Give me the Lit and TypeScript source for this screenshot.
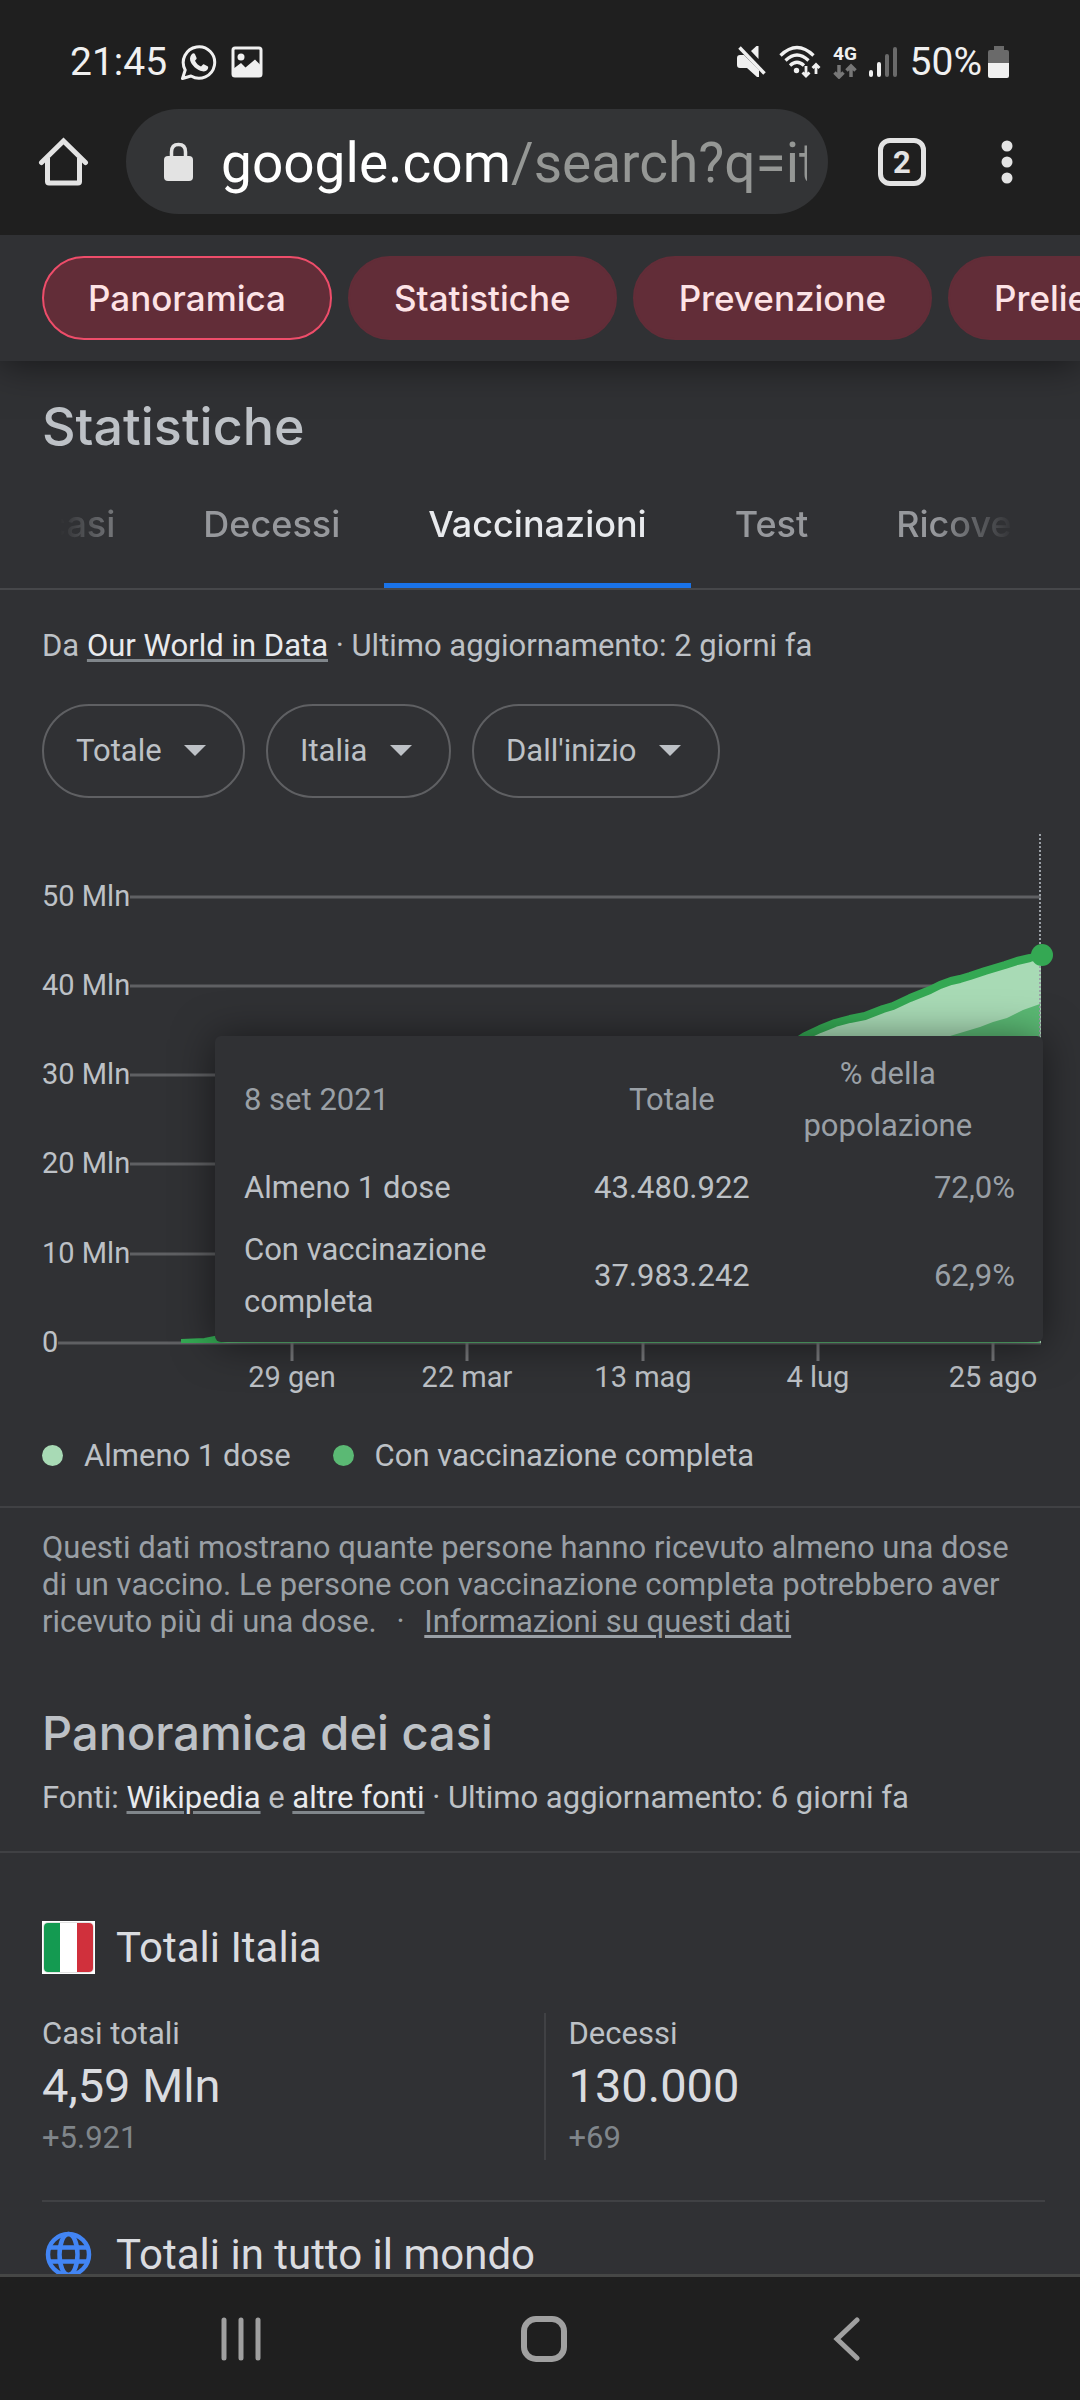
import { LitElement, html, css, svg } from "lit";
import { customElement } from "lit/decorators.js";

const chips = ["Panoramica", "Statistiche", "Prevenzione", "Prelievi"];
const tabs = ["Nuovi casi", "Decessi", "Vaccinazioni", "Test", "Ricoveri"];
const filters = [
  { label: "Dato", value: "Totale" },
  { label: "Paese", value: "Italia" },
  { label: "Periodo", value: "Dall'inizio" },
];

const yAxis = [
  { label: "50 Mln", y: 63 },
  { label: "40 Mln", y: 152 },
  { label: "30 Mln", y: 241 },
  { label: "20 Mln", y: 330 },
  { label: "10 Mln", y: 420 },
  { label: "0", y: 509 },
];
const xAxis = [
  { label: "29 gen", x: 292 },
  { label: "22 mar", x: 467 },
  { label: "13 mag", x: 643 },
  { label: "4 lug", x: 818 },
  { label: "25 ago", x: 993 },
];

const FIRST =
  "181,509 205,508 215,506 300,492 400,474 500,430 600,361 700,268 760,232 790,212 805,202 820,195 835,189 850,185 865,182 883,175 893,172 910,164 930,156 940,151 951,147 960,145 970,142 985,137 1005,131 1017,127 1030,124 1041,121";
const FULL =
  "181,509 300,500 450,478 600,430 750,340 850,262 950,202 970,196 980,193 993,188 1007,184 1023,176 1040,170";

@customElement("vaccine-chart")
class VaccineChart extends LitElement {
  static styles = css`
    :host {
      display: block;
      position: relative;
    }
    .plot {
      display: block;
      width: 100%;
      font: 29px/1 Roboto, sans-serif;
    }
    .label {
      fill: #bdc1c6;
    }
    .tip {
      position: absolute;
      top: 202px;
      left: 215px;
      right: 37px;
      padding: 7px 28px 9px 29px;
      border-radius: 6px;
      background: #303134;
      box-shadow: 0 2px 40px rgba(0, 0, 0, 0.5);
    }
    .data {
      width: 100%;
      table-layout: fixed;
      border-collapse: collapse;
      font: 31px/52px Roboto, sans-serif;
      color: #bdc1c6;
    }
    .data th,
    .data td {
      padding: 5px 0;
      font-weight: 400;
      text-align: center;
    }
    .data thead th {
      color: #9aa0a6;
    }
    .data .name {
      width: 44%;
      text-align: left;
    }
    .data .total {
      width: 23%;
    }
    .data .share {
      text-align: right;
      color: #9aa0a6;
    }
  `;

  render() {
    return html`
      <svg class="plot" viewBox="0 0 1080 570" role="img" aria-label="Vaccinazioni">
        <defs>
          <clipPath id="above-axis"><rect x="181" y="0" width="861" height="509" /></clipPath>
        </defs>
        ${yAxis.map(
          (t) => svg`
            <text class="label" x="42" y=${t.y + 9}>${t.label}</text>
            <path d="M${t.label === "0" ? 58 : 130} ${t.y}H1041" stroke="#5f6063" stroke-width="3" />`
        )}
        <polygon points="${FIRST} 1041,509 181,509" fill="#a8dab5" />
        <polygon points="${FULL} 1040,509 181,509" fill="#5bb974" />
        <polyline
          points=${FIRST}
          clip-path="url(#above-axis)"
          fill="none"
          stroke="#34a853"
          stroke-width="8"
          stroke-linejoin="round"
        />
        <path d="M1040 0V202" stroke="#9aa0a6" stroke-width="2" stroke-dasharray="2 2" />
        <circle cx="1042" cy="121" r="11" fill="#34a853" />
        ${xAxis.map(
          (t) => svg`
            <path d="M${t.x} 509V527" stroke="#77787b" stroke-width="3" />
            <text class="label" x=${t.x} y="553" text-anchor="middle">${t.label}</text>`
        )}
      </svg>
      <div class="tip">
        <table class="data">
          <thead>
            <tr>
              <th class="name" scope="col">8 set 2021</th>
              <th class="total" scope="col">Totale</th>
              <th scope="col">% della popolazione</th>
            </tr>
          </thead>
          <tbody>
            <tr>
              <th class="name" scope="row">Almeno 1 dose</th>
              <td>43.480.922</td>
              <td class="share">72,0%</td>
            </tr>
            <tr>
              <th class="name" scope="row">Con vaccinazione completa</th>
              <td>37.983.242</td>
              <td class="share">62,9%</td>
            </tr>
          </tbody>
        </table>
      </div>
    `;
  }
}

@customElement("status-bar")
class StatusBar extends LitElement {
  static styles = css`
    :host {
      display: flex;
      align-items: center;
      justify-content: space-between;
      height: 79px;
      padding: 22px 70px 0;
      font: 39px/48px Roboto, sans-serif;
      color: #f0f0f0;
    }
    .side {
      display: flex;
      align-items: center;
    }
    .left {
      gap: 14px;
    }
    .right {
      gap: 12px;
    }
    .power {
      display: flex;
      align-items: center;
      gap: 6px;
    }
    svg {
      display: block;
    }
  `;

  render() {
    return html`
      <div class="side left">
        <span>21:45</span>
        <svg width="36" height="36" viewBox="0 0 36 36" fill="none">
          <path d="M1.500 34.500L4.200 26A15.700 15.700 0 1 1 10 32Z" stroke="#f0f0f0" stroke-width="3" stroke-linejoin="round" />
          <path d="M11 10c1-1 2.500-.8 3 .3l1.500 3.400c.3.8 0 1.300-.5 1.900l-1 1.200c1.300 2.600 3.200 4.500 6 5.800l1.500-1.700c.5-.6 1-.7 1.700-.4l3.300 1.700c.8.4.8 1 .5 2.200-.7 2.300-3.400 3.300-5.500 2.900-6-1.200-11-6.200-12.300-10.800-.6-2.600.4-5.300 1.800-6.500z" fill="#f0f0f0" />
        </svg>
        <svg width="32" height="32" viewBox="0 0 32 32">
          <rect x="2" y="2" width="28" height="28" rx="2" fill="none" stroke="#f0f0f0" stroke-width="3" />
          <path d="M2 23l8-6 4.500 4.500L24 13.500l6 6V30H2z" fill="#f0f0f0" />
          <circle cx="10" cy="11" r="3.500" fill="#f0f0f0" />
        </svg>
      </div>
      <div class="side right">
        <svg width="30" height="33" viewBox="0 0 30 33" fill="#f0f0f0">
          <path d="M0 13q0-3 3-3h4L22 25v7h-2L10 23H3q-3 0-3-3z" />
          <path d="M21.500 1v13l-7.500-8 5.500-5z" />
          <path d="M2.500 2.500l25 26" stroke="#f0f0f0" stroke-width="3.500" />
        </svg>
        <svg width="42" height="34" viewBox="0 0 42 34" fill="none" stroke="#f0f0f0" stroke-width="3.300">
          <path d="M1.500 10.500Q18-5.500 34.500 10.500M6.500 15.500Q18 4.500 29.500 15.500M11 20.500Q18 14 25 20.500" />
          <circle cx="17.500" cy="25.500" r="2.700" fill="#f0f0f0" stroke="none" />
          <path d="M27 21v10M23.500 27.500l3.500 3.500 3.500-3.500M37 29V19.500M33.500 23l3.500-3.500 3.500 3.500" stroke-width="2.800" />
        </svg>
        <svg width="24" height="34" viewBox="0 0 24 34">
          <text x="12" y="15" text-anchor="middle" font-family="Roboto, sans-serif" font-weight="700" font-size="19" fill="#f0f0f0">4G</text>
          <path d="M6 20v12M1.500 27.500L6 32l4.500-4.500M18 32V21M13.500 25.500L18 21l4.500 4.500" fill="none" stroke="#777" stroke-width="3.500" />
        </svg>
        <svg width="29" height="32" viewBox="3 0 29 32" fill="none" stroke-width="4" stroke-linecap="round">
          <path d="M5 26v3M13 18v11" stroke="#f0f0f0" />
          <path d="M21 10v19M29 3v26" stroke="#6a6a6a" />
        </svg>
        <div class="power">
          <span>50%</span>
          <svg width="22" height="34" viewBox="0 0 22 34">
            <path d="M6 1h10v4h3q2 0 2 2v11H0V7q0-2 2-2h4z" fill="#6a6a6a" />
            <path d="M0 18h21v13q0 2-2 2H2q-2 0-2-2z" fill="#f0f0f0" />
          </svg>
        </div>
      </div>
    `;
  }
}

@customElement("browser-bar")
class BrowserBar extends LitElement {
  static styles = css`
    :host {
      display: flex;
      align-items: center;
      padding: 8px 58px 21px 38px;
    }
    button {
      display: grid;
      place-items: center;
      padding: 0;
      border: 0;
      background: none;
      color: #e3e3e3;
      font: 700 31px/40px Roboto, sans-serif;
    }
    .url {
      flex: 1;
      display: flex;
      align-items: center;
      gap: 28px;
      min-width: 0;
      height: 105px;
      margin: 0 50px 0 37px;
      padding: 0 21px 0 38px;
      border-radius: 53px;
      background: #333436;
      font: 55px/66px Roboto, sans-serif;
      color: #959795;
    }
    .lock {
      flex: none;
    }
    .address {
      flex: 1;
      padding-top: 2px;
      overflow: hidden;
      white-space: nowrap;
      color: inherit;
      text-decoration: none;
    }
    .host {
      color: #fff;
    }
    .count {
      box-sizing: border-box;
      width: 48px;
      height: 48px;
      border: 5px solid #e3e3e3;
      border-radius: 12px;
    }
    .more {
      width: 30px;
      margin-left: 66px;
    }
  `;

  render() {
    return html`
      <button aria-label="Home">
        <svg width="51" height="51" viewBox="0 0 51 51" fill="none" stroke="#e3e3e3" stroke-width="5">
          <path d="M3.500 26.500L25.500 5l22 21.500" stroke-linecap="round" />
          <path d="M9.500 22v23.500q0 1.500 1.500 1.500h29q1.500 0 1.500-1.500V22" />
        </svg>
      </button>
      <div class="url">
        <svg class="lock" width="29" height="40" viewBox="0 0 29 40">
          <rect x="0" y="14" width="29" height="25" rx="4" fill="#e3e3e3" />
          <path d="M7.500 15V10q0-7.500 7-7.500t7 7.500v5" fill="none" stroke="#e3e3e3" stroke-width="3.500" />
        </svg>
        <a class="address" href="#"><span class="host">google.com</span>/search?q=italia</a>
      </div>
      <button class="count">2</button>
      <button class="more" aria-label="Menu">
        <svg width="12" height="46" viewBox="0 0 12 46" fill="#e3e3e3">
          <circle cx="6" cy="7" r="5.500" />
          <circle cx="6" cy="23" r="5.500" />
          <circle cx="6" cy="39" r="5.500" />
        </svg>
      </button>
    `;
  }
}

@customElement("app-root")
class AppRoot extends LitElement {
  static styles = css`
    :host {
      display: flex;
      flex-direction: column;
      height: 100vh;
      overflow: hidden;
      background: #1f1f1f;
      color: #bdc1c6;
      font: 31px/37px Roboto, sans-serif;
    }
    .page {
      flex: 1;
      min-height: 0;
      overflow: hidden;
      background: #303134;
    }
    .chip-bar {
      box-shadow: 0 4px 36px rgba(0, 0, 0, 0.5);
    }
    .chips {
      display: flex;
      gap: 16px;
      padding: 21px 42px;
      overflow: hidden;
    }
    .chip {
      flex: none;
      box-sizing: border-box;
      height: 84px;
      padding: 0 44px;
      border: 2px solid #622d38;
      border-radius: 42px;
      background: #622d38;
      color: #fde3e6;
      font: 500 35px/40px Inter, sans-serif;
    }
    .chip.on {
      border-color: #ee4d6a;
    }
    h2 {
      margin: 0;
      padding: 0 42px;
      font: 500 52px/60px Inter, sans-serif;
      color: #bdc1c6;
    }
    .stats {
      padding-top: 36px;
    }
    .tabs {
      display: flex;
      margin-top: 27px;
      padding: 0 66px 0 60px;
      border-bottom: 2px solid #46474a;
    }
    .strip {
      flex: 1;
      display: flex;
      min-width: 0;
      overflow-x: auto;
      scrollbar-width: none;
      mask-image: linear-gradient(90deg, transparent, #000 80px, #000 calc(100% - 80px), transparent);
    }
    .tab {
      flex: none;
      height: 104px;
      padding: 0 44px 20px;
      border: 0;
      border-bottom: 5px solid transparent;
      background: none;
      color: #96989c;
      font: 500 36px/40px Inter, sans-serif;
    }
    .tab.on {
      border-color: #1a73e8;
      color: #e8eaed;
    }
    .source {
      margin: 0;
      padding: 37px 42px 0;
    }
    .source a {
      color: #e8eaed;
      text-decoration: underline 3px #80868b;
      text-underline-offset: 3px;
    }
    .filters {
      display: flex;
      gap: 21px;
      padding: 40px 42px 36px;
    }
    .filter {
      display: grid;
      align-items: center;
    }
    .filter > * {
      grid-area: 1 / 1;
    }
    select {
      appearance: none;
      box-sizing: border-box;
      height: 94px;
      margin: 0;
      padding: 0 81px 2px 32px;
      border: 2px solid #5f6063;
      border-radius: 47px;
      background: none;
      color: #bdc1c6;
      font: 31px/37px Roboto, sans-serif;
    }
    .arrow {
      justify-self: end;
      margin-right: 39px;
      pointer-events: none;
    }
    .legend {
      display: flex;
      gap: 42px;
      margin: 0;
      padding: 33px 42px 32px;
      list-style: none;
    }
    .legend li {
      display: flex;
      align-items: center;
      gap: 21px;
    }
    .dot {
      width: 21px;
      height: 21px;
      border-radius: 50%;
      background: #a8dab5;
    }
    .dot.full {
      background: #5bb974;
    }
    .note {
      margin: 0;
      padding: 21px 48px 0 42px;
      border-top: 2px solid #404144;
      color: #9aa0a6;
    }
    .note a {
      color: inherit;
      text-decoration: underline 3px;
      text-underline-offset: 3px;
    }
    .sep {
      margin: 0 12px;
    }
    .cases {
      padding-top: 63px;
    }
    .cases h2 {
      font-size: 47px;
    }
    .cases .source {
      padding-top: 16px;
      padding-bottom: 35px;
      border-bottom: 2px solid #404144;
    }
    .region {
      margin: 0 35px 0 42px;
    }
    .place {
      display: flex;
      align-items: center;
      gap: 21px;
      margin: 0;
      font: 400 42px/53px Roboto, sans-serif;
      color: #dadce0;
    }
    .italy {
      padding: 68px 0 40px;
      border-bottom: 2px solid #404144;
    }
    .figures {
      display: grid;
      grid-template-columns: 1fr 1fr;
      margin-top: 39px;
    }
    .figure {
      height: 147px;
      padding-left: 23px;
      border-left: 2px solid #404144;
    }
    .figure:first-child {
      padding-left: 0;
      border-left: 0;
    }
    .figure p {
      margin: 0;
    }
    .figure .name {
      line-height: 42px;
    }
    .figure .value {
      font-size: 47px;
      line-height: 62px;
      color: #dadce0;
    }
    .figure .delta {
      line-height: 42px;
      color: #80868b;
    }
    .world {
      padding-top: 26px;
    }
    .system {
      display: flex;
      justify-content: space-around;
      align-items: center;
      height: 123px;
      padding: 0 82px 0 90px;
      border-top: 3px solid #464746;
    }
    .system button {
      width: 120px;
      height: 100px;
      display: grid;
      place-items: center;
      padding: 0;
      border: 0;
      background: none;
    }
  `;

  /* Bring the selected tab to the middle of the scrolling strip. */
  firstUpdated() {
    const strip = this.renderRoot.querySelector(".strip") as HTMLElement;
    const tab = this.renderRoot.querySelector(".tab.on") as HTMLElement;
    const s = strip.getBoundingClientRect();
    const t = tab.getBoundingClientRect();
    strip.scrollLeft += t.left + t.width / 2 - (s.left + s.width / 2);
  }

  render() {
    return html`
      <status-bar></status-bar>
      <browser-bar></browser-bar>
      <main class="page">
        <div class="chip-bar">
          <nav class="chips">
            ${chips.map((c, i) => html`<button class="chip ${i === 0 ? "on" : ""}">${c}</button>`)}
          </nav>
        </div>
        <section class="stats">
          <h2>Statistiche</h2>
          <div class="tabs">
            <div class="strip" role="tablist">
              ${tabs.map(
                (t, i) =>
                  html`<button class="tab ${i === 2 ? "on" : ""}" role="tab" aria-selected=${i === 2}>${t}</button>`
              )}
            </div>
          </div>
          <p class="source">Da <a href="#">Our World in Data</a> · Ultimo aggiornamento: 2 giorni fa</p>
          <div class="filters">
            ${filters.map(
              (f) => html`
                <label class="filter">
                  <select aria-label=${f.label}>
                    <option>${f.value}</option>
                  </select>
                  <svg class="arrow" width="22" height="12" viewBox="0 0 22 12">
                    <path d="M0 0h22L11 11z" fill="#bdc1c6" />
                  </svg>
                </label>
              `
            )}
          </div>
          <vaccine-chart></vaccine-chart>
          <ul class="legend">
            <li><span class="dot"></span>Almeno 1 dose</li>
            <li><span class="dot full"></span>Con vaccinazione completa</li>
          </ul>
          <p class="note">
            Questi dati mostrano quante persone hanno ricevuto almeno una dose di un vaccino. Le persone con vaccinazione
            completa potrebbero aver ricevuto più di una dose. <span class="sep">·</span>
            <a href="#">Informazioni su questi dati</a>
          </p>
        </section>
        <section class="cases">
          <h2>Panoramica dei casi</h2>
          <p class="source">
            Fonti: <a href="#">Wikipedia</a> e <a href="#">altre fonti</a> · Ultimo aggiornamento: 6 giorni fa
          </p>
          <div class="region italy">
            <h3 class="place">
              <svg width="53" height="53" viewBox="0 0 53 53">
                <defs><clipPath id="flag"><rect x="2" y="2" width="49" height="49" rx="4" /></clipPath></defs>
                <rect width="53" height="53" fill="#fff" />
                <rect x="1" y="1" width="51" height="51" rx="5" fill="#e2e2e2" />
                <g clip-path="url(#flag)">
                  <rect x="2" y="2" width="49" height="49" fill="#fff" />
                  <rect x="2" y="2" width="16" height="49" fill="#149a51" />
                  <rect x="35" y="2" width="16" height="49" fill="#d0303c" />
                </g>
              </svg>
              Totali Italia
            </h3>
            <div class="figures">
              <div class="figure">
                <p class="name">Casi totali</p>
                <p class="value">4,59 Mln</p>
                <p class="delta">+5.921</p>
              </div>
              <div class="figure">
                <p class="name">Decessi</p>
                <p class="value">130.000</p>
                <p class="delta">+69</p>
              </div>
            </div>
          </div>
          <div class="region world">
            <h3 class="place">
              <svg width="53" height="53" viewBox="0 0 53 53" fill="none" stroke="#4285f4" stroke-width="4.500">
                <circle cx="26.500" cy="26.500" r="20.500" />
                <ellipse cx="26.500" cy="26.500" rx="9" ry="20.500" />
                <path d="M7 19.500h39M7 33.500h39" />
              </svg>
              Totali in tutto il mondo
            </h3>
          </div>
        </section>
      </main>
      <nav class="system">
        <button aria-label="Recenti">
          <svg width="42" height="44" viewBox="0 0 42 44" stroke="#a0a0a0" stroke-width="5" stroke-linecap="round">
            <path d="M4 3v38M21 3v38M38 3v38" />
          </svg>
        </button>
        <button aria-label="Schermata Home">
          <svg width="48" height="48" viewBox="0 0 48 48" fill="none" stroke="#a0a0a0" stroke-width="6">
            <rect x="4" y="4" width="40" height="40" rx="12" />
          </svg>
        </button>
        <button aria-label="Indietro">
          <svg width="28" height="44" viewBox="0 0 28 44" fill="none" stroke="#a0a0a0" stroke-width="5" stroke-linecap="round">
            <path d="M24 3L4 22l20 19" />
          </svg>
        </button>
      </nav>
    `;
  }
}
